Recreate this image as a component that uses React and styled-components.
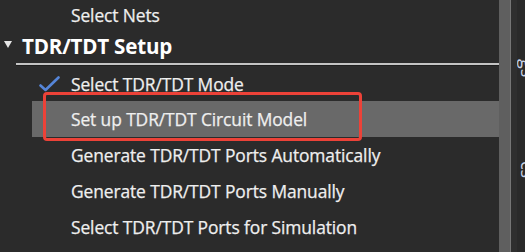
import React from "react";
import styled, { createGlobalStyle } from "styled-components";

const Global = createGlobalStyle`
  html, body { margin: 0; padding: 0; background: #2b2b2b; }
  body { font-family: "Open Sans", "Noto Sans", sans-serif; }
`;

const Frame = styled.div`
  width: 525px;
  height: 252px;
  display: flex;
  overflow: hidden;
  background: #2b2b2b;
`;

const Panel = styled.div`
  width: 499px;
  display: flex;
  flex-direction: column;
  position: relative;
`;

const Scroll = styled.div`
  width: 11px;
  background: #5f5f5f;
  border-right: 1px solid #767676;
`;

const Gutter = styled.div`
  width: 6px;
  background: #2f2f2f;
`;

const Edge = styled.div`
  flex: 1;
  overflow: hidden;
  display: flex;
  flex-direction: column;
  padding-top: 59px;
  gap: 84px;
  background: #2a2a2a;
`;

const EdgeGlyph = styled.span`
  display: block;
  font-size: 18px;
  color: #c9d3e6;
  transform: rotate(90deg);
  transform-origin: left top;
  margin-left: 20px;
  line-height: 1;
  white-space: nowrap;
`;

const Item = styled.div`
  height: ${(p) => p.$h || 36}px;
  margin-left: ${(p) => (p.$indent ? 32 : 0)}px;
  padding-left: ${(p) => (p.$indent ? 6 : 38)}px;
  display: flex;
  align-items: center;
  gap: 11px;
  position: relative;
  background: ${(p) => (p.$active ? "#696969" : "transparent")};
  color: #efefef;
  font-size: 17.4px;
  font-weight: 400;
  letter-spacing: -0.1px;
  -webkit-text-stroke: 0.25px #efefef;
`;

const IconSlot = styled.span`
  width: 22px;
  height: 20px;
  display: flex;
  align-items: center;
  justify-content: center;
`;

const Header = styled.div`
  height: 34px;
  display: flex;
  align-items: center;
  padding-left: 4px;
  color: #ffffff;
  font-weight: 700;
  font-size: 20.6px;
  letter-spacing: -0.2px;
`;

const Caret = styled.span`
  width: 0;
  height: 0;
  border-left: 4px solid transparent;
  border-right: 4px solid transparent;
  border-top: 7px solid #e6e6e6;
  margin-right: 10px;
  margin-top: -4px;
`;

const Divider = styled.div`
  height: 2px;
  margin-left: 16px;
  background: #c4c4c4;
  border-bottom: 1px solid #1e1e1e;
`;

const Highlight = styled.div`
  position: absolute;
  left: 11px;
  top: -9px;
  width: 313px;
  height: 43px;
  border: 3px solid #ec4238;
  border-radius: 4px;
  pointer-events: none;
`;

const Check = () => (
  <svg width="21" height="16" viewBox="0 0 21 16">
    <path
      d="M1.5 9.5 L6.5 14 L19.5 1.5"
      fill="none"
      stroke="#5585d8"
      strokeWidth="2.6"
      strokeLinecap="round"
      strokeLinejoin="round"
    />
  </svg>
);

export default function App() {
  return (
    <>
      <Global />
      <Frame>
        <Panel>
          <Item $h={29}>
            <IconSlot />
            Select Nets
          </Item>
          <Header>
            <Caret />
            TDR/TDT Setup
          </Header>
          <Divider />
          <Item $indent $h={35}>
            <IconSlot>
              <Check />
            </IconSlot>
            Select TDR/TDT Mode
          </Item>
          <Item $indent $active>
            <IconSlot />
            Set up TDR/TDT Circuit Model
            <Highlight />
          </Item>
          <Item $indent>
            <IconSlot />
            Generate TDR/TDT Ports Automatically
          </Item>
          <Item $indent>
            <IconSlot />
            Generate TDR/TDT Ports Manually
          </Item>
          <Item $indent>
            <IconSlot />
            Select TDR/TDT Ports for Simulation
          </Item>
        </Panel>
        <Scroll />
        <Gutter />
        <Edge>
          <EdgeGlyph>gs</EdgeGlyph>
          <EdgeGlyph>cs</EdgeGlyph>
        </Edge>
      </Frame>
    </>
  );
}
